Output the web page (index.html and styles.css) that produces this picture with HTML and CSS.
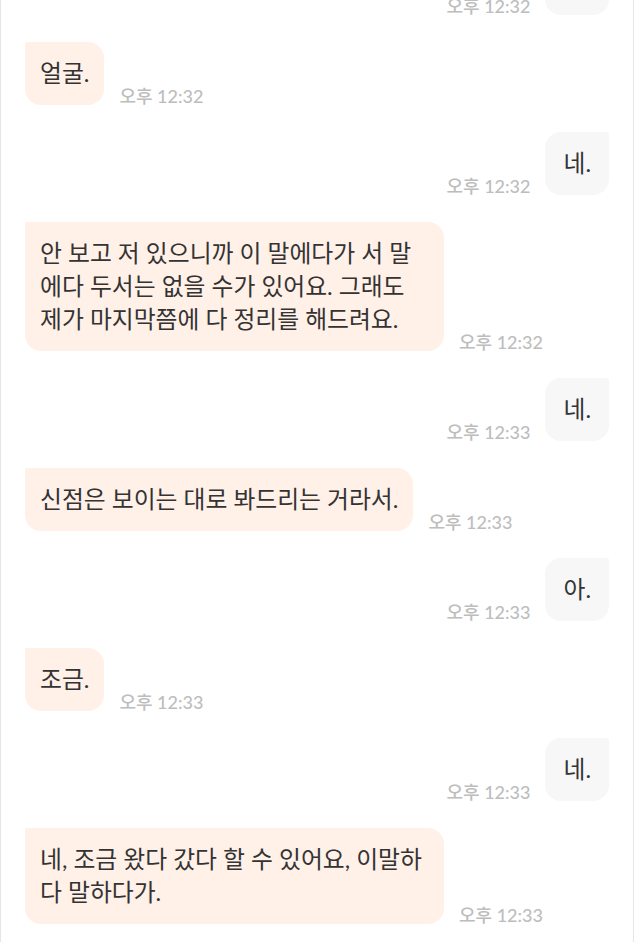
FILE: index.html
```html
<!DOCTYPE html>
<html lang="ko">
<head>
  <meta charset="UTF-8">
  <meta name="viewport" content="width=device-width, initial-scale=1.0">
  <title>상담</title>
  <link rel="stylesheet" href="styles.css">
</head>
<body>
  <div class="chat">
    <div class="list">
      <div class="row sent">
        <span class="time">오후 12:32</span>
        <div class="bubble">네.</div>
      </div>
      <div class="row recv">
        <div class="bubble">얼굴.</div>
        <span class="time">오후 12:32</span>
      </div>
      <div class="row sent">
        <span class="time">오후 12:32</span>
        <div class="bubble">네.</div>
      </div>
      <div class="row recv">
        <div class="bubble">안 보고 저 있으니까 이 말에다가 서 말에다 두서는 없을 수가 있어요. 그래도 제가 마지막쯤에 다 정리를 해드려요.</div>
        <span class="time">오후 12:32</span>
      </div>
      <div class="row sent">
        <span class="time">오후 12:33</span>
        <div class="bubble">네.</div>
      </div>
      <div class="row recv">
        <div class="bubble">신점은 보이는 대로 봐드리는 거라서.</div>
        <span class="time">오후 12:33</span>
      </div>
      <div class="row sent">
        <span class="time">오후 12:33</span>
        <div class="bubble">아.</div>
      </div>
      <div class="row recv">
        <div class="bubble">조금.</div>
        <span class="time">오후 12:33</span>
      </div>
      <div class="row sent">
        <span class="time">오후 12:33</span>
        <div class="bubble">네.</div>
      </div>
      <div class="row recv">
        <div class="bubble">네, 조금 왔다 갔다 할 수 있어요, 이말하다 말하다가.</div>
        <span class="time">오후 12:33</span>
      </div>
    </div>
  </div>
</body>
</html>
```

FILE: styles.css
```css
* {
  margin: 0;
  padding: 0;
  box-sizing: border-box;
}
html,
body {
  height: 100%;
  background: #ffffff;
  font-family: Lato, 'Noto Sans CJK KR', sans-serif;
}
.chat {
  width: 634px;
  min-height: 100%;
  border-left: 1px solid #e6e6e6;
  border-right: 1px solid #e6e6e6;
  padding: 0 24px;
  overflow: hidden;
}
.list {
  margin-top: -48px;
  display: flex;
  flex-direction: column;
  gap: 27px;
}
.row {
  display: flex;
  align-items: flex-end;
  gap: 15px;
}
.row.sent {
  justify-content: flex-end;
}
.bubble {
  max-width: 419px;
  padding: 15px;
  font-size: 23.8px;
  line-height: 33px;
  color: #333333;
}
.recv .bubble {
  background: #fff0e8;
  border-radius: 2px 16px 16px 16px;
}
.sent .bubble {
  background: #f7f7f7;
  padding: 15px 18px;
  border-radius: 16px 2px 16px 16px;
}
.time {
  flex: none;
  font-size: 18px;
  font-weight: 500;
  line-height: 1;
  color: #bdbdbd;
  white-space: nowrap;
}
```
